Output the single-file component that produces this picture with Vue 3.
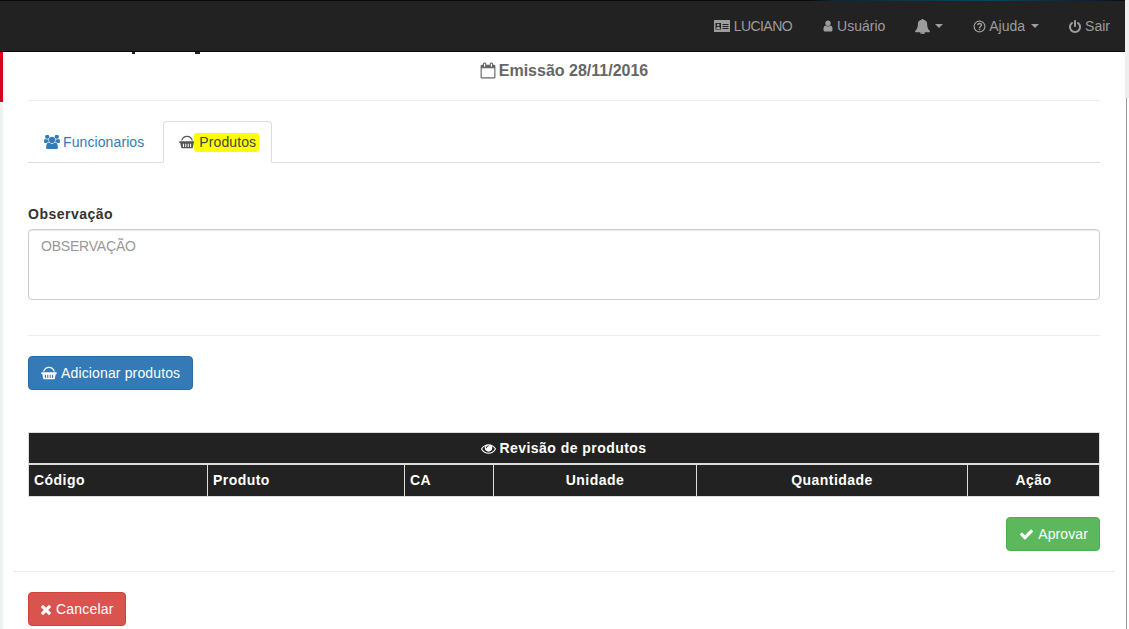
<script setup>
const navIconUser = "M1536 1399q0 109-62.5 187t-150.5 78h-854q-88 0-150.5-78t-62.5-187q0-85 8.5-160.5t31.5-152 58.5-131 94-89 134.5-34.5q131 128 313 128t313-128q76 0 134.5 34.5t94 89 58.5 131 31.5 152 8.5 160.5zm-256-887q0 159-112.5 271.5t-271.5 112.5-271.5-112.5-112.5-271.5 112.5-271.5 271.5-112.5 271.5 112.5 112.5 271.5z"
const bell = "M912 1696q0-16-16-16-59 0-101.5-42.5t-42.5-101.5q0-16-16-16t-16 16q0 73 51.5 124.5t124.5 51.5q16 0 16-16zm816-288q0 52-38 90t-90 38h-448q0 106-75 181t-181 75-181-75-75-181h-448q-52 0-90-38t-38-90q50-42 91-88t85-119.5 74.5-158.5 50-206 19.5-260q0-152 117-282.5t307-158.5q-8-19-8-39 0-40 28-68t68-28 68 28 28 68q0 20-8 39 190 28 307 158.5t117 282.5q0 139 19.5 260t50 206 74.5 158.5 85 119.5 91 88z"
const power = "M1664 896q0 156-61 298t-164 245-245 164-298 61-298-61-245-164-164-245-61-298q0-182 80.5-343t226.5-270q43-32 95.5-25t83.5 50q32 42 24.5 94.5t-49.5 84.5q-98 74-151.5 181t-53.5 228q0 104 40.5 198.5t109.5 163.5 163.5 109.5 198.5 40.5 198.5-40.5 163.5-109.5 109.5-163.5 40.5-198.5q0-121-53.5-228t-151.5-181q-42-32-49.5-84.5t24.5-94.5q31-43 84-50t95 25q146 109 226.5 270t80.5 343zm-640-768v640q0 52-38 90t-90 38-90-38-38-90v-640q0-52 38-90t90-38 90 38 38 90z"
const calendar = "M192 1664h1408v-1024h-1408v1024zm384-1216v-288q0-14-9-23t-23-9h-64q-14 0-23 9t-9 23v288q0 14 9 23t23 9h64q14 0 23-9t9-23zm768 0v-288q0-14-9-23t-23-9h-64q-14 0-23 9t-9 23v288q0 14 9 23t23 9h64q14 0 23-9t9-23zm384-64v1280q0 52-38 90t-90 38h-1408q-52 0-90-38t-38-90v-1280q0-52 38-90t90-38h128v-96q0-66 47-113t113-47h64q66 0 113 47t47 113v96h384v-96q0-66 47-113t113-47h64q66 0 113 47t47 113v96h128q52 0 90 38t38 90z"
const users = "M593 896q-162 5-265 128h-134q-82 0-138-40.5t-56-118.5q0-353 124-353 6 0 43.5 21t97.5 42.5 119 21.5q67 0 133-23-5 37-5 66 0 139 81 256zm1071 637q0 120-73 189.5t-194 69.5h-874q-121 0-194-69.5t-73-189.5q0-53 3.5-103.5t14-109 26.5-108.5 43-97.5 62-81 85.5-53.5 111.5-20q10 0 43 21.5t73 48 107 48 135 21.5 135-21.5 107-48 73-48 43-21.5q61 0 111.5 20t85.5 53.5 62 81 43 97.5 26.5 108.5 14 109 3.5 103.5zm-1024-1277q0 106-75 181t-181 75-181-75-75-181 75-181 181-75 181 75 75 181zm704 384q0 159-112.5 271.5t-271.5 112.5-271.5-112.5-112.5-271.5 112.5-271.5 271.5-112.5 271.5 112.5 112.5 271.5zm576 225q0 78-56 118.5t-138 40.5h-134q-103-123-265-128 81-117 81-256 0-29-5-66 66 23 133 23 59 0 119-21.5t97.5-42.5 43.5-21q124 0 124 353zm-128-609q0 106-75 181t-181 75-181-75-75-181 75-181 181-75 181 75 75 181z"
const eye = "M1664 960q-152-236-381-353 61 104 61 225 0 185-131.5 316.5t-316.5 131.5-316.5-131.5-131.5-316.5q0-121 61-225-229 117-381 353 133 205 333.5 326.5t434.5 121.5 434.5-121.5 333.5-326.5zm-720-384q0-20-14-34t-34-14q-125 0-214.5 89.5t-89.5 214.5q0 20 14 34t34 14 34-14 14-34q0-86 61-147t147-61q20 0 34-14t14-34zm848 384q0 34-20 69-140 230-376.5 368.5t-499.5 138.5-499.5-139-376.5-368q-20-35-20-69t20-69q140-229 376.5-368t499.5-139 499.5 139 376.5 368q20 35 20 69z"
const check = "M1671 566q0 40-28 68l-724 724-136 136q-28 28-68 28t-68-28l-136-136-362-362q-28-28-28-68t28-68l136-136q28-28 68-28t68 28l294 295 656-657q28-28 68-28t68 28l136 136q28 28 28 68z"
const times = "M1490 1322q0 40-28 68l-136 136q-28 28-68 28t-68-28l-294-294-294 294q-28 28-68 28t-68-28l-136-136q-28-28-28-68t28-68l294-294-294-294q-28-28-28-68t28-68l136-136q28-28 68-28t68 28l294 294 294-294q28-28 68-28t68 28l136 136q28 28 28 68t-28 68l-294 294 294 294q28 28 28 68z"
const basket = "M.8 7h16.400a.6.6 0 0 1 .6.6v1a.6.6 0 0 1-.6.6h-.5l-1 5.200a.8.8 0 0 1-.8.6H3.100a.8.8 0 0 1-.8-.6l-1-5.200H.8a.6.6 0 0 1-.6-.6v-1A.6.6 0 0 1 .8 7zM4.300 10v3.800h1.200V10zM7 10v3.800h1.200V10zM9.800 10v3.800H11V10zM12.500 10v3.800h1.200V10zM2.200 6.400C2.800 3 5.600 .8 9 .8s6.200 2.200 6.800 5.600h-1.500C13.700 3.800 11.600 2.300 9 2.300S4.300 3.800 3.700 6.400z"
const columns = [
  { label: 'Código', width: 179, left: true },
  { label: 'Produto', width: 197, left: true },
  { label: 'CA', width: 89, left: true },
  { label: 'Unidade', width: 203 },
  { label: 'Quantidade', width: 271 },
  { label: 'Ação', width: 132 },
]
</script>

<template>
  <div class="page">
    <div class="shell">
      <header class="navbar">
        <div class="topline"></div>
        <nav class="nav">
          <a class="nav-item first">
            <svg class="ico" viewBox="0 0 16 12" width="16" height="12"><path fill="currentColor" d="M0 0h16v12H0z"/><path fill="#222" d="M8.500 4h6v1h-6zM8.500 6h6v1h-6zM8.500 8h6v1h-6z"/><path fill="#222" d="M1.500 3h5.500v6.500H1.500z"/><circle cx="4.200" cy="5" r="1.300" fill="currentColor"/><path fill="currentColor" d="M2.200 9c0-1.500.8-2.200 2-2.200s2 .7 2 2.200z"/></svg>
            <span class="name">LUCIANO</span>
          </a>
          <a class="nav-item">
            <svg class="ico" viewBox="192 128 1408 1536" width="10" height="12"><path fill="currentColor" :d="navIconUser"/></svg>
            Usuário
          </a>
          <a class="nav-item">
            <svg class="ico" viewBox="64 64 1664 1664" width="15" height="15"><path fill="currentColor" :d="bell"/></svg>
            <span class="caret bell-caret"></span>
          </a>
          <a class="nav-item help">
            <svg class="ico" viewBox="0 0 14 14" width="13" height="13"><circle cx="7" cy="7" r="5.800" fill="none" stroke="currentColor" stroke-width="1.300"/><path fill="none" stroke="currentColor" stroke-width="1.500" d="M4.900 5.500c.2-1.200 1-1.800 2.100-1.800s2.100.7 2.100 1.800c0 1.500-2.100 1.500-2.100 3"/><rect x="6.200" y="9.300" width="1.600" height="1.500" fill="currentColor"/></svg>
            Ajuda
            <span class="caret"></span>
          </a>
          <a class="nav-item last">
            <svg class="ico" viewBox="128 0 1536 1664" width="12" height="13"><path fill="currentColor" :d="power"/></svg>
            Sair
          </a>
        </nav>
      </header>

      <main class="content">
        <span class="clipped one"></span>
        <span class="clipped two"></span>
        <div class="inner">
          <h3 class="emission">
            <svg class="ico" viewBox="0 0 1792 1792" width="16" height="17"><path fill="currentColor" :d="calendar"/></svg>
            Emissão 28/11/2016
          </h3>
          <hr class="rule" />

          <ul class="tabs">
            <li class="tab">
              <svg class="ico" viewBox="0 128 1920 1536" width="16" height="14"><path fill="currentColor" :d="users"/></svg>
              Funcionarios
            </li>
            <li class="tab active">
              <svg class="ico" viewBox="0 0 18 16" width="16" height="14"><path fill="currentColor" fill-rule="evenodd" :d="basket"/></svg>
              <mark class="hl">Produtos</mark>
            </li>
          </ul>

          <label class="obs-label">Observação</label>
          <div class="textarea">OBSERVAÇÃO</div>
          <hr class="rule second" />

          <button class="btn primary add">
            <svg class="ico" viewBox="0 0 18 16" width="16" height="14"><path fill="currentColor" fill-rule="evenodd" :d="basket"/></svg>
            Adicionar produtos
          </button>

          <div class="table">
            <div class="table-title">
              <svg class="ico" viewBox="0 256 1792 1280" width="15" height="11"><path fill="currentColor" :d="eye"/></svg>
              Revisão de produtos
            </div>
            <div class="table-row">
              <div v-for="c in columns" :key="c.label" class="cell" :class="{ left: c.left }" :style="{ width: c.width + 'px' }">{{ c.label }}</div>
            </div>
          </div>

          <div class="approve-row">
            <button class="btn success">
              <svg class="ico" viewBox="121 300 1550 1250" width="13" height="11"><path fill="currentColor" :d="check"/></svg>
              Aprovar
            </button>
          </div>
        </div>
        <hr class="rule footer-rule" />
        <div class="inner">
          <button class="btn danger">
            <svg class="ico" viewBox="300 240 1190 1320" width="10" height="11"><path fill="currentColor" :d="times"/></svg>
            Cancelar
          </button>
        </div>
        <span class="red-mark"></span>
      </main>
    </div>
    <aside class="scroll-edge"></aside>
  </div>
</template>

<style>
html, body { margin: 0; overflow: hidden; background: #fff; }
</style>

<style scoped>
.page {
  display: flex;
  width: 1129px;
  height: 629px;
  overflow: hidden;
  background: #fff;
  font-family: "Liberation Sans", Arial, sans-serif;
  font-size: 14px;
  color: #333;
}
.shell { width: 1125px; flex: none; }
.scroll-edge {
  flex: 1;
  background: linear-gradient(#eeeeee 98px, #fff 98px);
  position: relative;
}
.scroll-edge::after {
  content: "";
  position: absolute;
  left: 1px;
  top: 98px;
  bottom: 0;
  width: 1px;
  background: #9a9a9a;
}
.navbar {
  height: 52px;
  background: #222;
  border-bottom: 1px solid #080808;
  box-sizing: border-box;
  position: relative;
}
.topline {
  height: 1px;
  background: linear-gradient(90deg, #0a0a0a 72%, #06283f 74%, #0b4560 88%, #0a1c33 98%, #0a0a0a);
}
.nav {
  display: flex;
  justify-content: flex-end;
  height: 50px;
  align-items: center;
  color: #9d9d9d;
}
.nav-item {
  padding: 0 15px;
  display: flex;
  align-items: center;
  gap: 4px;
  white-space: nowrap;
  line-height: 20px;
}
.nav-item.first { padding-right: 16px; }
.nav-item.last { padding-left: 14px; }
.nav-item.help { gap: 3px; padding-right: 16px; }
.help .caret { margin-left: 3px; }
.name { letter-spacing: -.55px; }
.ico { flex: none; }
.caret {
  display: inline-block;
  width: 0;
  height: 0;
  margin-left: 2px;
  border-top: 4px solid currentColor;
  border-left: 4px solid transparent;
  border-right: 4px solid transparent;
}
.bell-caret { margin-left: 1px; }
.content {
  position: relative;
  border-left: 3px solid #eef1f2;
  height: 577px;
  box-sizing: border-box;
  background: #fff;
}
.red-mark {
  position: absolute;
  left: -3px;
  top: 0;
  width: 3px;
  height: 50px;
  background: #d9001b;
}
.clipped { position: absolute; top: 0; background: #222; height: 2px; }
.clipped.one { left: 129px; width: 3px; }
.clipped.two { left: 192px; width: 5px; }
.inner { padding: 0 25px; }
.emission {
  margin: 0;
  padding-top: 9px;
  height: 40px;
  box-sizing: border-box;
  display: flex;
  justify-content: center;
  align-items: flex-start;
  gap: 3px;
  font-size: 16px;
  font-weight: bold;
  color: #666;
  line-height: 20px;
}
.emission .ico { margin-top: 1px; }
.rule {
  margin: 8px 0 0;
  border: 0;
  border-top: 1px solid #eee;
  height: 0;
}
.tabs {
  list-style: none;
  margin: 20px 0 0;
  padding: 0;
  display: flex;
  border-bottom: 1px solid #ddd;
  height: 41px;
}
.tab {
  padding: 0 16px 0 15px;
  margin-right: 2px;
  display: flex;
  align-items: center;
  gap: 3px;
  color: #337ab7;
  height: 41px;
  box-sizing: border-box;
  border: 1px solid transparent;
  letter-spacing: .1px;
}
.tab.active {
  color: #555;
  background: #fff;
  height: 42px;
  border: 1px solid #ddd;
  border-bottom-color: #fff;
  border-radius: 4px 4px 0 0;
  padding: 0 12px 0 15px;
}
.hl {
  background: #ff0;
  color: #444;
  padding: 0 3px 0 5px;
  margin-left: -4px;
  line-height: 19px;
  border-radius: 3px;
}
.obs-label {
  display: block;
  margin-top: 43px;
  font-weight: bold;
  font-size: 14px;
  letter-spacing: .5px;
  color: #333;
  line-height: 17px;
}
.textarea {
  margin-top: 6px;
  height: 71px;
  box-sizing: border-box;
  border: 1px solid #ccc;
  border-radius: 4px;
  padding: 6px 12px;
  color: #999;
  line-height: 20px;
  letter-spacing: -.2px;
  box-shadow: inset 0 1px 1px rgba(0,0,0,.075);
}
.rule.second { margin-top: 35px; }
.btn {
  display: inline-flex;
  align-items: center;
  justify-content: center;
  gap: 4px;
  height: 34px;
  box-sizing: border-box;
  border: 1px solid;
  border-radius: 4px;
  padding: 0 12px;
  font: inherit;
  letter-spacing: .2px;
  line-height: 20px;
  color: #fff;
}
.add { margin-top: 20px; letter-spacing: .14px; }
.primary { background: #337ab7; border-color: #2e6da4; }
.success { background: #5cb85c; border-color: #4cae4c; padding: 0 11px 0 13px; letter-spacing: .1px; }
.danger { background: #d9534f; border-color: #d43f3a; gap: 5px; padding: 0 11px 0 12px; }
.table {
  margin-top: 42px;
  border: 1px solid #ddd;
  color: #fff;
  font-weight: bold;
  letter-spacing: .45px;
  background: #ddd;
}
.table-title {
  height: 30px;
  background: #222;
  display: flex;
  align-items: center;
  justify-content: center;
  gap: 3px;
}
.table-row {
  display: flex;
  margin-top: 2px;
  height: 31px;
  gap: 0;
  background: #222;
}
.cell {
  box-sizing: border-box;
  height: 31px;
  line-height: 31px;
  text-align: center;
  border-left: 1px solid #ddd;
  padding: 0 5px;
}
.cell:first-child { border-left: 0; width: 178px !important; }
.cell.left { text-align: left; }
.table-row .cell:last-child { flex: 1; }
.approve-row {
  display: flex;
  justify-content: flex-end;
  margin-top: 20px;
}
.success .ico { margin-right: 1px; }
.footer-rule {
  margin: 20px 10px 0;
}
.content > .inner:nth-of-type(n) .danger { margin-top: 20px; }
</style>
